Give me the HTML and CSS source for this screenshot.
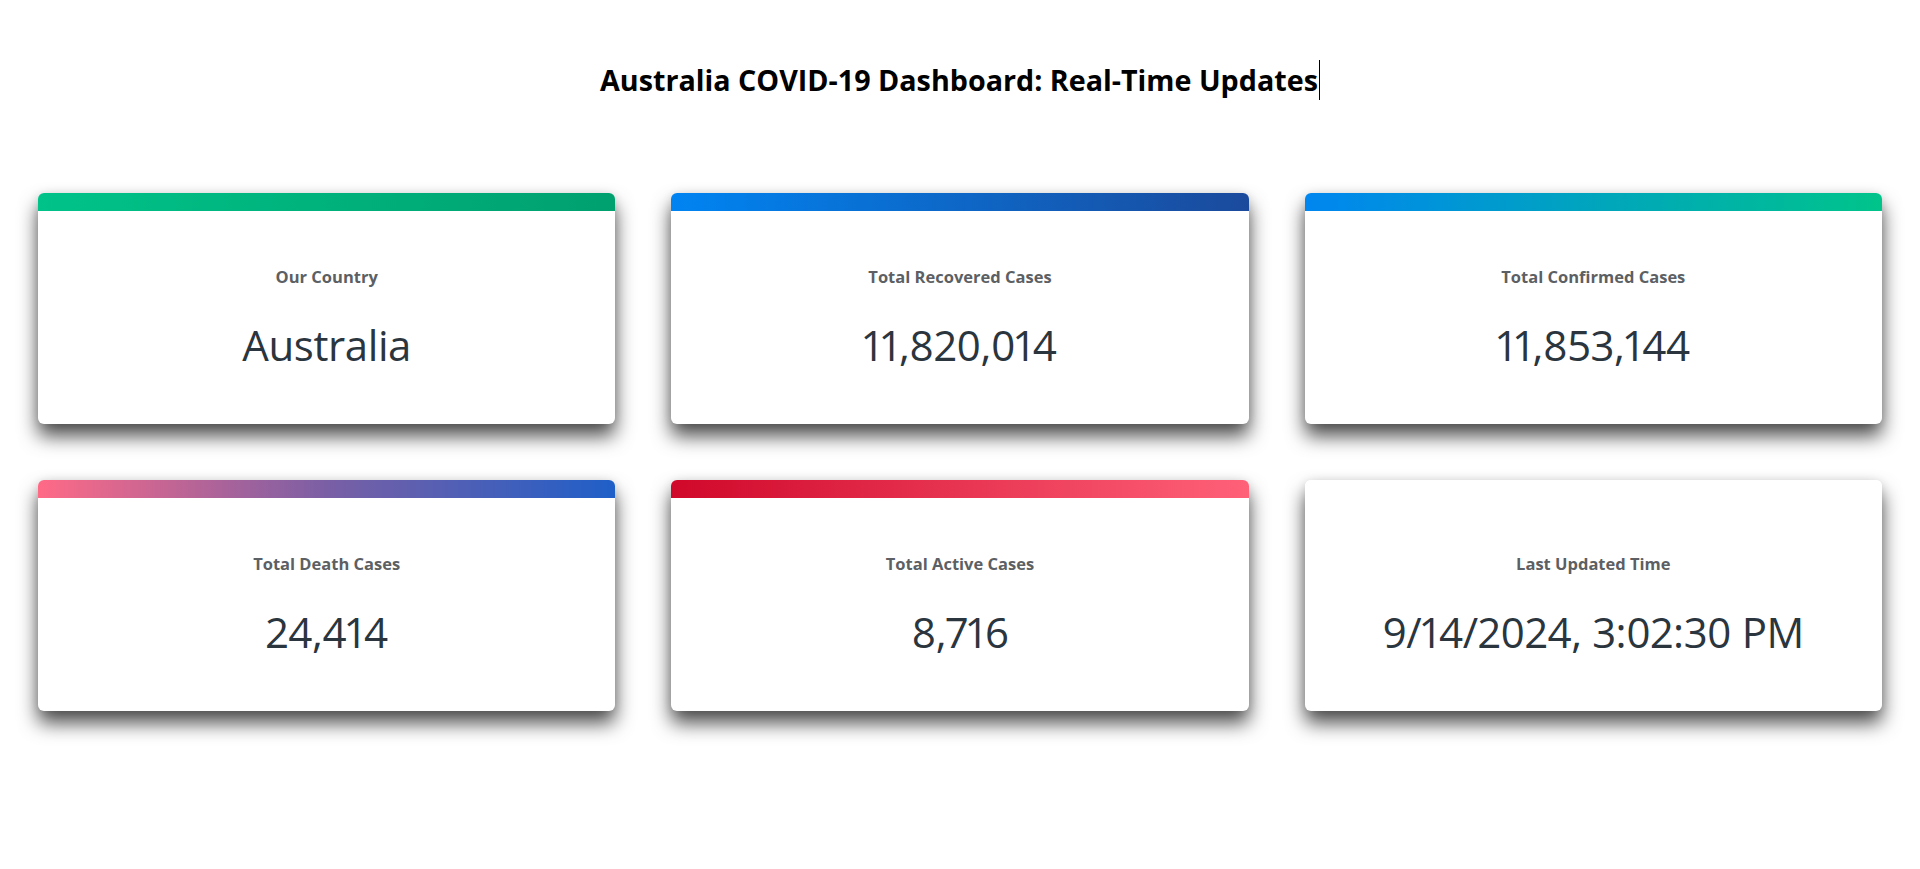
FILE: index.html
```html
<!DOCTYPE html>
<html lang="en">
<head>
<meta charset="utf-8">
<title>Australia COVID-19 Dashboard</title>
<link rel="stylesheet" href="styles.css">
</head>
<body>
<header class="header">
  <h1 class="title">Australia COVID-19 Dashboard: Real-Time Updates<span class="caret"></span></h1>
</header>
<main class="grid">
  <section class="card">
    <div class="bar bar-green"></div>
    <div class="card-body">
      <div class="label">Our Country</div>
      <div class="value">Australia</div>
    </div>
  </section>
  <section class="card">
    <div class="bar bar-blue"></div>
    <div class="card-body">
      <div class="label">Total Recovered Cases</div>
      <div class="value">11,820,014</div>
    </div>
  </section>
  <section class="card">
    <div class="bar bar-teal"></div>
    <div class="card-body">
      <div class="label">Total Confirmed Cases</div>
      <div class="value">11,853,144</div>
    </div>
  </section>
  <section class="card">
    <div class="bar bar-purple"></div>
    <div class="card-body">
      <div class="label">Total Death Cases</div>
      <div class="value">24,414</div>
    </div>
  </section>
  <section class="card">
    <div class="bar bar-red"></div>
    <div class="card-body">
      <div class="label">Total Active Cases</div>
      <div class="value">8,716</div>
    </div>
  </section>
  <section class="card">
    <div class="bar bar-none"></div>
    <div class="card-body">
      <div class="label">Last Updated Time</div>
      <div class="value">9/14/2024, 3:02:30 PM</div>
    </div>
  </section>
</main>
</body>
</html>
```

FILE: styles.css
```css
* { box-sizing: border-box; }

html, body {
  margin: 0;
  padding: 0;
  background: #ffffff;
  font-family: "Open Sans", "Noto Sans", "Liberation Sans", sans-serif;
}

.header {
  padding-top: 64px;
  display: flex;
  justify-content: center;
}

.title {
  margin: 0;
  font-size: 28.7px;
  line-height: 32px;
  font-weight: 700;
  color: #000;
  display: flex;
  align-items: center;
}

.caret {
  display: inline-block;
  width: 1px;
  height: 40px;
  margin: -4px 0 -4px 1px;
  background: #000;
}

.grid {
  display: grid;
  grid-template-columns: repeat(3, 1fr);
  column-gap: 56px;
  row-gap: 56px;
  padding: 97px 38px 120px;
}

.card {
  background: #fff;
  border-radius: 6px;
  overflow: hidden;
  box-shadow: 0 0 10px rgba(0, 0, 0, 0.08), 0 12px 19px rgba(0, 0, 0, 0.7);
  display: flex;
  flex-direction: column;
}

.bar {
  height: 18px;
}
.bar-green  { background: linear-gradient(90deg, #00c389, #00a06f); }
.bar-blue   { background: linear-gradient(90deg, #0084f2, #1b4a9c); }
.bar-teal   { background: linear-gradient(90deg, #0086f0, #00c48a); }
.bar-purple { background: linear-gradient(90deg, #ff6a86, #7a5fa5 50%, #1f5fc8); }
.bar-red    { background: linear-gradient(90deg, #d0082a, #ff6179); }
.bar-none   { background: #fff; }

.card-body {
  padding: 56px 20px 54px;
  display: flex;
  flex-direction: column;
  align-items: center;
  text-align: center;
}

.label {
  font-size: 16.5px;
  line-height: 20px;
  font-weight: 700;
  color: #5c5f63;
}

.value {
  margin-top: 33px;
  font-size: 42px;
  line-height: 50px;
  font-weight: 400;
  color: #2b353e;
  letter-spacing: -0.4px;
  font-variant-numeric: proportional-nums;
}
```
